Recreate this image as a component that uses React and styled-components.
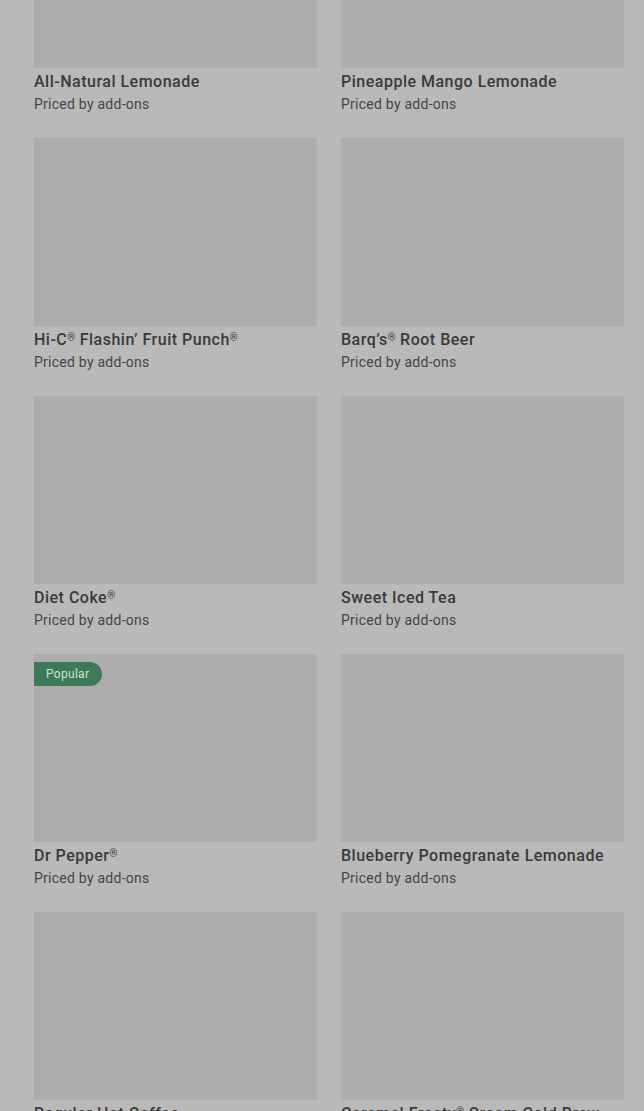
import React from 'react';
import styled, { createGlobalStyle } from 'styled-components';

const GlobalStyle = createGlobalStyle`
  html, body {
    margin: 0;
    padding: 0;
    background: #b9b9b9;
    overflow: hidden;
  }
  body {
    font-family: Roboto, 'Noto Sans', Arial, sans-serif;
  }
`;

const Page = styled.div`
  height: 1111px;
  overflow: hidden;
  background: #b9b9b9;
`;

const Grid = styled.div`
  display: grid;
  grid-template-columns: 283px 283px;
  column-gap: 24px;
  row-gap: 24px;
  padding: 0 20px 0 34px;
  margin-top: -120px;
`;

const Card = styled.div`
  display: flex;
  flex-direction: column;
`;

const Thumb = styled.div`
  position: relative;
  height: 188px;
  background: #adadad;
`;

const Badge = styled.span`
  position: absolute;
  top: 8px;
  left: 0;
  height: 24px;
  padding: 0 13px 0 12px;
  display: flex;
  align-items: center;
  background: #3e7a58;
  color: #cfe2d6;
  font-size: 12px;
  letter-spacing: 0.3px;
  border-radius: 0 12px 12px 0;
`;

const Title = styled.div`
  margin-top: 4px;
  height: 20px;
  font-size: 16px;
  line-height: 20px;
  font-weight: 500;
  letter-spacing: 0.5px;
  color: #3a3a3a;
  white-space: nowrap;
`;

const Reg = styled.span`
  font-size: 10px;
  line-height: 0;
  vertical-align: 4px;
  letter-spacing: 0;
`;

const Sub = styled.div`
  margin-top: 2px;
  font-size: 14px;
  line-height: 20px;
  letter-spacing: 0.25px;
  color: #454545;
`;

const items = [
  { name: 'All-Natural Lemonade' },
  { name: 'Pineapple Mango Lemonade' },
  { name: 'Hi-C® Flashin’ Fruit Punch®' },
  { name: 'Barq’s® Root Beer' },
  { name: 'Diet Coke®' },
  { name: 'Sweet Iced Tea' },
  { name: 'Dr Pepper®', popular: true },
  { name: 'Blueberry Pomegranate Lemonade' },
  { name: 'Regular Hot Coffee' },
  { name: 'Caramel Frosty® Cream Cold Brew' },
];

// split out the ® marks so they sit small and raised
const renderName = name =>
  name.split('®').map((part, i, arr) => (
    <React.Fragment key={i}>
      {part}
      {i < arr.length - 1 && <Reg>®</Reg>}
    </React.Fragment>
  ));

export default function App() {
  return (
    <Page>
      <GlobalStyle />
      <Grid>
        {items.map(item => (
          <Card key={item.name}>
            <Thumb>{item.popular && <Badge>Popular</Badge>}</Thumb>
            <Title>{renderName(item.name)}</Title>
            <Sub>Priced by add-ons</Sub>
          </Card>
        ))}
      </Grid>
    </Page>
  );
}
